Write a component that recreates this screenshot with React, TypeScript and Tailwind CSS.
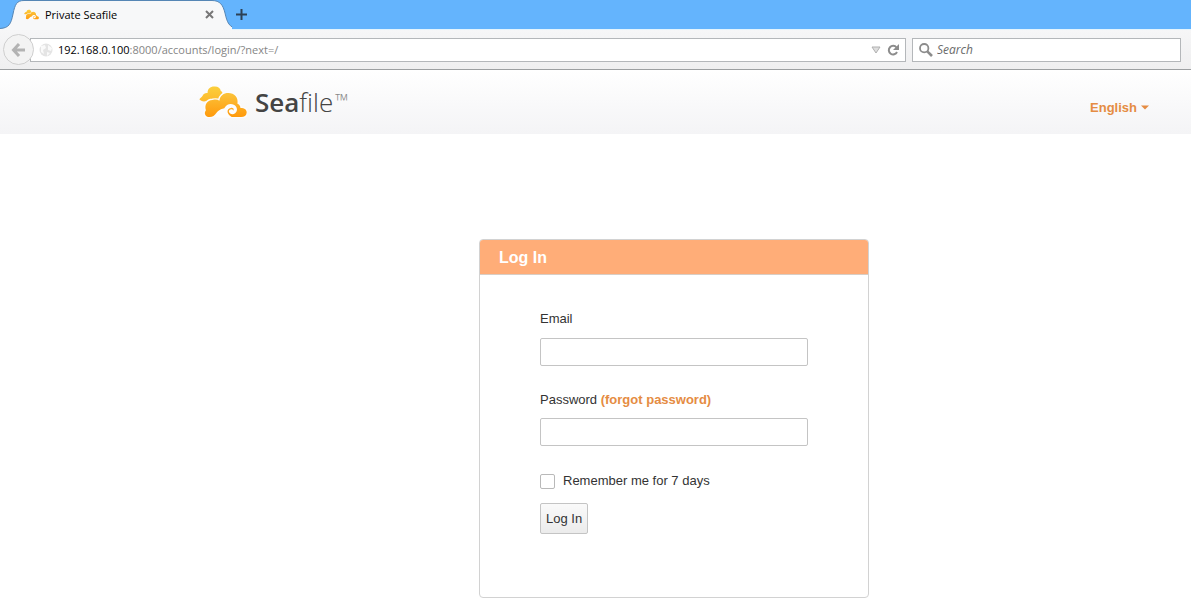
import React, { useState } from 'react';

const CloudLogo: React.FC<{ className?: string }> = ({ className }) => (
  <svg viewBox="12 17 146 96" className={className} aria-hidden="true">
    <defs>
      <linearGradient id="backCloud" x1="0" y1="0" x2="0" y2="1">
        <stop offset="0" stopColor="#fbcf3c" />
        <stop offset="1" stopColor="#fdb92c" />
      </linearGradient>
      <linearGradient id="frontCloud" x1="0" y1="0" x2="0" y2="1">
        <stop offset="0" stopColor="#fbc33a" />
        <stop offset="1" stopColor="#ff9a0c" />
      </linearGradient>
    </defs>
    <path
      d="M13 57C17 52 20 51 23 46C26 40 31 37 38 38C38 25 46 18 58 18C69 17 77 22 78 31C84 34 85 40 81 44L74 56L34 62C26 65 17 62 13 57Z"
      fill="url(#backCloud)"
    />
    <path
      d="M44 111C31 111 26 99 33 90C28 75 36 59 53 59C62 57 68 57 74 61C76 46 87 38 101 38C120 38 132 51 129 70C136 73 138 78 138 83C151 83 158 89 157 98C156 107 150 111 140 111L115 111C98 111 86 101 90 87C79 84 71 91 66 97C59 106 54 111 44 111Z"
      fill="url(#frontCloud)"
      stroke="#fcfcfd"
      strokeWidth="9"
      paintOrder="stroke"
    />
    <path
      d="M60 112C66 104 70 97 76 91C81 86 86 84 89 84C95 71 108 68 118 73C129 79 131 92 122 99C115 105 105 102 103 95C102 89 107 86 112 87C115 88 117 90 116 92C120 86 115 82 109 83C101 84 98 90 99 96C101 104 108 108 116 113Z"
      fill="#fcfcfd"
    />
  </svg>
);

const BrowserChrome: React.FC = () => (
  <div className="font-['Open_Sans','Noto_Sans',sans-serif] text-[12px]">
    <div className="flex h-[29px] items-center bg-[#64b4fd]">
      <div className="relative flex h-full w-[232px] shrink-0 items-center pl-6 pr-[18px]">
        <svg viewBox="0 0 232 30" className="absolute left-0 top-0 h-[30px] w-[232px]" aria-hidden="true">
          <path
            d="M0 28.5C9 28 11 24 13 14C15 4 17 .5 24 .5H212C220 .5 223 5 225 13C227 22 229 28 238 28.5V30H0Z"
            fill="#f7f8f9"
          />
          <path
            d="M0 28.5C9 28 11 24 13 14C15 4 17 .5 24 .5H212C220 .5 223 5 225 13C227 22 229 28 238 28.5"
            fill="none"
            stroke="#5586b5"
          />
        </svg>
        <CloudLogo className="relative h-[11px] w-[15px]" />
        <span className="relative ml-1.5 flex-1 text-[11px] leading-4 text-black">Private Seafile</span>
        <button type="button" aria-label="Close tab" className="relative">
          <svg viewBox="0 0 9 9" className="size-[9px]" stroke="#777" strokeWidth="2">
            <path d="M1 1L8 8M8 1L1 8" />
          </svg>
        </button>
      </div>
      <button type="button" aria-label="New tab" className="ml-1">
        <svg viewBox="0 0 11 11" className="size-[11px]" stroke="#2c4055" strokeWidth="2">
          <path d="M5.5 0V11M0 5.5H11" />
        </svg>
      </button>
    </div>

    <div className="flex h-[41px] items-center border-b border-t border-b-[#9c9fa1] border-t-[#e3f4fd] bg-linear-to-b from-[#f6f6f7] to-[#efeff0] pl-[3px] pr-2.5">
      <button
        type="button"
        aria-label="Back"
        className="z-10 flex size-[31px] shrink-0 items-center justify-center rounded-full border border-[#cfcfcf] bg-[#f3f3f3]"
      >
        <svg viewBox="0 0 15 14" className="h-[14px] w-[15px]" fill="none" stroke="#b3b3b3" strokeWidth="3">
          <path d="M8 1L2.5 7L8 13M2.5 7H14" />
        </svg>
      </button>
      <div className="-ml-1 flex h-6 flex-1 items-center border border-[#b4b7ba] bg-white pl-2 pr-1.5">
        <svg viewBox="0 0 14 14" className="size-[14px]" aria-hidden="true">
          <circle cx="7" cy="7" r="6.5" fill="#e4e4e4" />
          <path d="M2 3L6 2L7 5L4 7L5 11L2 9ZM9 2L13 5L12 8L9 7ZM8 9L11 10L8 13Z" fill="#fafafa" />
        </svg>
        <span className="ml-[5px] flex-1 text-[11px] leading-4 text-[#858585]">
          <span className="text-black">192.168.0.100</span>:8000/accounts/login/?next=/
        </span>
        <svg viewBox="0 0 10 8" className="mr-1.5 h-2 w-2.5" aria-hidden="true">
          <path d="M1 1H9L5 7Z" fill="#dedede" stroke="#b0b0b0" />
        </svg>
        <button type="button" aria-label="Reload">
          <svg viewBox="0 0 12 12" className="size-3">
            <path d="M9.5 3.5A4.3 4.3 0 1 0 10 8" fill="none" stroke="#8c8c8c" strokeWidth="2" />
            <path d="M12 0V6H6Z" fill="#8c8c8c" />
          </svg>
        </button>
      </div>
      <div className="ml-1.5 flex h-6 w-[269px] items-center border border-[#b4b7ba] bg-white pl-1.5">
        <svg viewBox="0 0 14 14" className="size-[14px]" fill="none" stroke="#8c8c8c" aria-hidden="true">
          <circle cx="5.2" cy="5.2" r="4.2" strokeWidth="1.8" />
          <path d="M8.3 8.3L13 13" strokeWidth="2.6" />
        </svg>
        <input
          type="text"
          aria-label="Search"
          placeholder="Search"
          className="ml-1 min-w-0 flex-1 text-[12px] italic outline-none placeholder:text-[#6b6b6b]"
        />
      </div>
    </div>
  </div>
);

const LoginForm: React.FC = () => {
  const [email, setEmail] = useState('');
  const [password, setPassword] = useState('');
  const [remember, setRemember] = useState(false);

  const inputClass = 'block h-7 w-full rounded-[2px] border border-[#c4c4c4] bg-white px-1.5 outline-none';

  return (
    <div className="w-[390px] rounded-[4px] border border-[#d2d2d2]">
      <h2 className="rounded-t-[3px] border-b border-[#d9cdc4] bg-[#ffad78] px-[19px] pb-1 pt-1.5 text-[16px] font-bold leading-6 text-white">
        Log In
      </h2>
      <form className="px-[60px] pb-[63px] pt-[34px]" onSubmit={(e) => e.preventDefault()}>
        <label htmlFor="email" className="mb-[9px] block leading-5">Email</label>
        <input id="email" type="text" value={email} onChange={(e) => setEmail(e.target.value)} className={inputClass} />

        <div className="mb-2 mt-6 leading-5">
          <label htmlFor="password">Password</label>{' '}
          <a href="#forgot" className="font-bold text-[#e58c43]">(forgot password)</a>
        </div>
        <input
          id="password"
          type="password"
          value={password}
          onChange={(e) => setPassword(e.target.value)}
          className={inputClass}
        />

        <label className="mt-[25px] flex items-center gap-2 leading-5">
          <input
            type="checkbox"
            checked={remember}
            onChange={(e) => setRemember(e.target.checked)}
            className="size-[15px] appearance-none rounded-[2px] border border-[#b9b9b9] bg-white checked:bg-[#e58c43]"
          />
          Remember me for 7 days
        </label>
        <button
          type="submit"
          className="mt-3 block h-[31px] rounded-[2px] border border-[#c4c4c4] bg-linear-to-b from-[#fafafa] to-[#ebebeb] px-[5px] text-[13px]"
        >
          Log In
        </button>
      </form>
    </div>
  );
};

const App: React.FC = () => (
  <div className="min-h-screen bg-white font-['Liberation_Sans',Arial,sans-serif] text-[13px] text-[#333]">
    <BrowserChrome />

    <header className="flex h-16 items-center justify-between bg-linear-to-b from-white to-[#f4f4f6] pl-[199px] pr-[42px]">
      <a href="#home" className="flex items-center gap-2">
        <CloudLogo className="h-8 w-12" />
        <span className="flex items-start font-['Open_Sans',sans-serif] text-[26px] leading-8 text-[#444]">
          <span className="font-semibold">Sea</span>
          <span className="font-light">file</span>
          <span className="ml-0.5 pt-0.5 text-[18px] font-light leading-6 text-[#888]">™</span>
        </span>
      </a>
      <button type="button" className="mt-[11px] flex items-center gap-1 font-bold leading-5 text-[#e58c43]">
        English
        <svg viewBox="0 0 8 5" className="h-[5px] w-2" fill="currentColor" aria-hidden="true">
          <path d="M0 .5H8L4 4.5Z" />
        </svg>
      </button>
    </header>

    <main className="flex justify-center pb-[10px] pl-[199px] pr-[42px] pt-[105px]">
      <LoginForm />
    </main>
  </div>
);

export default App;
